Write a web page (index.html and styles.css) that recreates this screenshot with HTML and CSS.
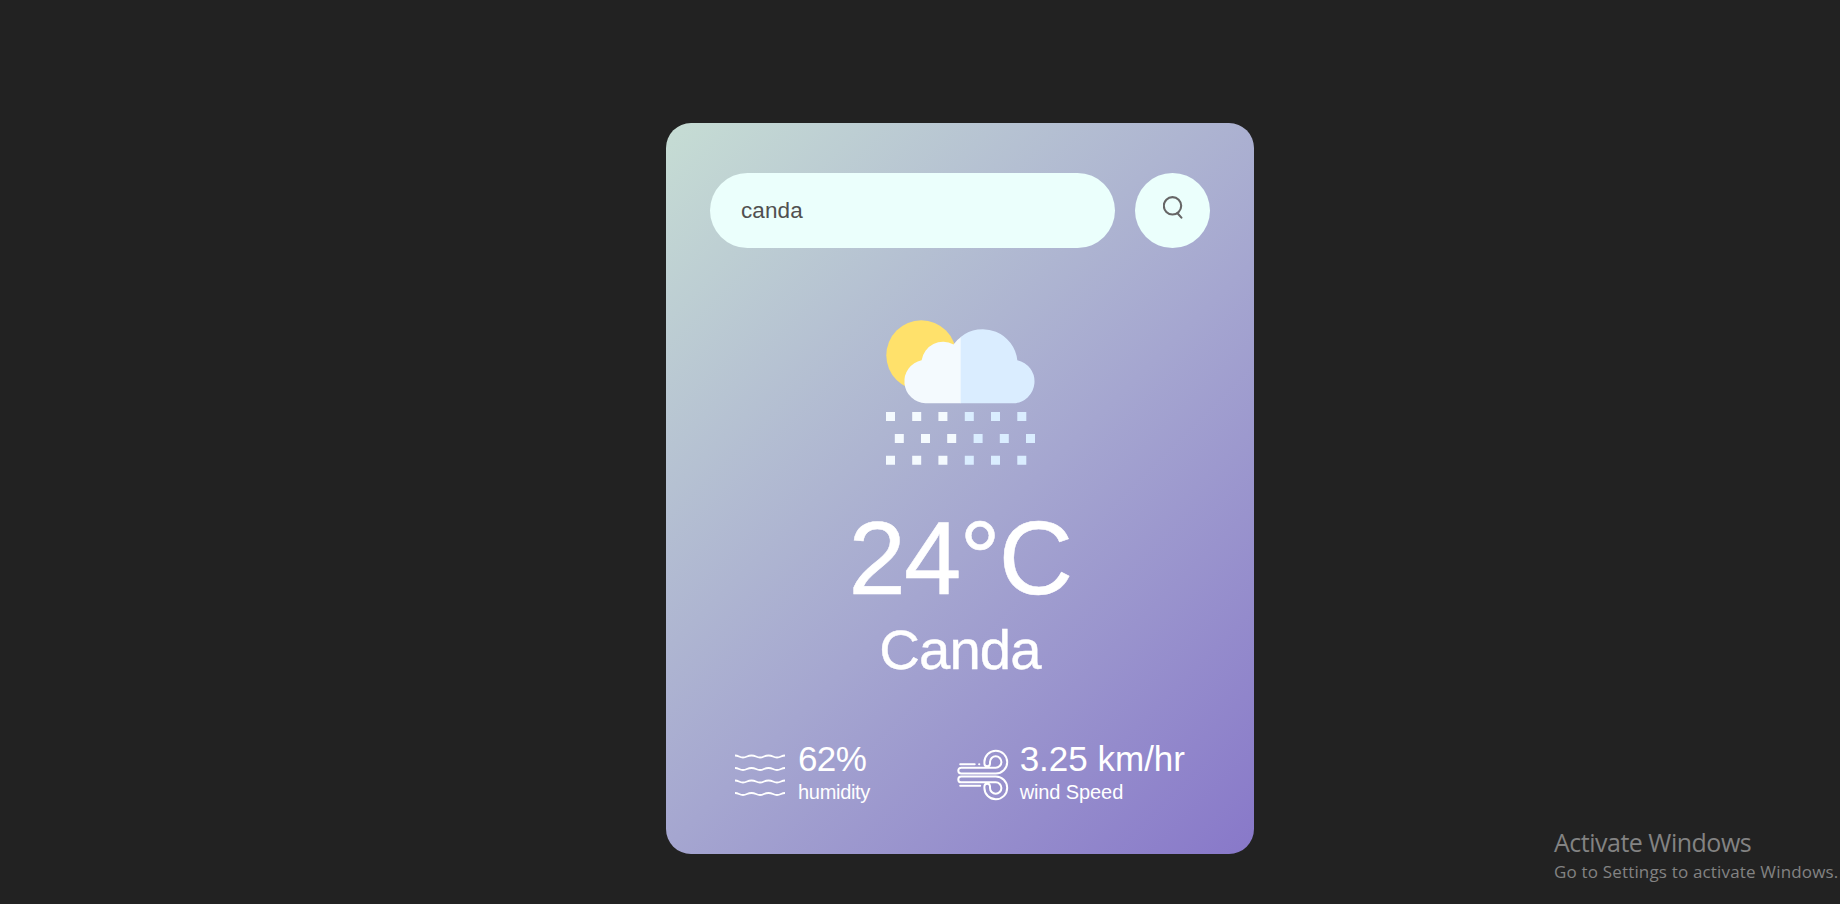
FILE: index.html
```
<!DOCTYPE html>
<html lang="en">
<head>
<meta charset="utf-8">
<title>Weather</title>
<link rel="stylesheet" href="styles.css">
</head>
<body>
<main class="card">
  <form class="search">
    <input class="search-input" type="text" value="canda" spellcheck="false">
    <button class="search-button" type="button" aria-label="Search">
      <svg class="search-icon" viewBox="0 0 20 24"><circle cx="9.5" cy="10.8" r="8.700"/><path d="M14.500 18.300l3.900 4.300"/></svg>
    </button>
  </form>
  <section class="weather">
    <svg class="weather-icon" viewBox="0 0 149 145">
      <circle cx="35.3" cy="35.3" r="35" fill="#ffe16b"/>
      <path fill="#f4fafe" d="M75 83.3H39.5A21.8 21.8 0 0 1 35.6 40.2A21.7 21.7 0 0 1 67.5 24.5Q70.5 20 75 17Z"/>
      <path fill="#daedff" d="M74.700 83.300H127.300A21.800 21.800 0 0 0 131.300 40.200A34.800 34.800 0 0 0 74.700 17Z"/>
      <path fill="#f4fafe" d="M0 92h9v9H0zM26.2 92h9v9h-9zM52.4 92h9v9h-9zM8.8 114h9v9h-9zM35 114h9v9h-9zM61.2 114h9v9h-9zM0 135.8h9v9H0zM26.2 135.8h9v9h-9zM52.4 135.8h9v9h-9z"/>
      <path fill="#daedff" d="M78.8 92h9v9h-9zM105 92h9v9h-9zM131.3 92h9v9h-9zM87.6 114h9v9h-9zM113.8 114h9v9h-9zM140 114h9v9h-9zM78.8 135.8h9v9h-9zM105 135.8h9v9h-9zM131.3 135.8h9v9h-9z"/>
    </svg>
    <h1 class="temp">24°C</h1>
    <h2 class="city">Canda</h2>
  </section>
  <section class="details">
    <div class="detail">
      <svg class="detail-icon waves" viewBox="0 0 50 50">
        <path d="M0 5.5C4 5.500 4 7.500 8 7.500S12 5.500 16.500 5.500S21 7.500 25 7.500S29 5.500 33.500 5.500S38 7.500 42 7.500S46 5.500 50 5.500"/>
        <path d="M0 18C4 18 4 20 8 20S12 18 16.500 18S21 20 25 20S29 18 33.500 18S38 20 42 20S46 18 50 18"/>
        <path d="M0 30.500C4 30.500 4 32.500 8 32.500S12 30.500 16.500 30.500S21 32.500 25 32.500S29 30.500 33.500 30.500S38 32.500 42 32.500S46 30.500 50 30.500"/>
        <path d="M0 43C4 43 4 45 8 45S12 43 16.500 43S21 45 25 45S29 43 33.500 43S38 45 42 45S46 43 50 43"/>
      </svg>
      <div><p class="value percent">62%</p><p class="label">humidity</p></div>
    </div>
    <div class="detail">
      <svg class="detail-icon" viewBox="-.7 0 50 50">
        <path d="M2.500 14.300H17M21.400 14.300H21.600M2.500 35.700H22.500"/>
        <path d="M38 23.500H3.500A2.900 2.900 0 0 1 3.500 17.700H38A5.700 5.700 0 1 0 32.300 12V13.500A2.800 2.800 0 0 1 26.700 13.500V12A11.400 11.400 0 1 1 38 23.500Z"/>
        <path d="M38 26.500H3.500A2.900 2.900 0 0 0 3.500 32.300H38A5.700 5.700 0 1 1 32.300 38V36.500A2.800 2.800 0 0 0 26.700 36.500V38A11.400 11.400 0 1 0 38 26.500Z"/>
      </svg>
      <div><p class="value">3.25 km/hr</p><p class="label wind">wind Speed</p></div>
    </div>
  </section>
</main>
<aside class="activation"><p class="activation-title">Activate Windows</p><p class="activation-text">Go to Settings to activate Windows.</p></aside>
</body>
</html>
```
FILE: styles.css
```
* { box-sizing: border-box; margin: 0; padding: 0; }
html { overflow: hidden; }
body { width: 1920px; height: 904px; background: #222; font-family: "Liberation Sans", Arial, sans-serif; padding-top: 123px; }
.card { width: 588px; height: 731px; margin: 0 auto; padding: 50px 44px; border-radius: 25px; color: #fff; background: linear-gradient(135deg, #c6ddd4 0%, #a5a6d0 55%, #8878c9 100%); }
.search { display: flex; justify-content: space-between; }
.search-input { width: 405px; height: 75px; padding: 1px 31px 0; border: 0; outline: 0; border-radius: 38px; background: #ebfffc; color: #505050; font: 22.5px "Liberation Sans", Arial, sans-serif; letter-spacing: .1px; }
.search-button { display: flex; justify-content: center; width: 75px; height: 75px; padding-top: 22px; border: 0; border-radius: 50%; background: #ebfffc; }
.search-icon { width: 20px; height: 24px; fill: none; stroke: #666; stroke-width: 2.1; stroke-linecap: round; }
.weather { display: flex; flex-direction: column; align-items: center; padding-top: 72px; }
.weather-icon { width: 149px; height: 145px; }
.temp { margin-top: 36px; font-size: 103px; line-height: 115px; font-weight: 400; letter-spacing: -1.8px; -webkit-text-stroke: .5px #fff; }
.city { margin-top: 2px; font-size: 56.25px; line-height: 64px; font-weight: 400; letter-spacing: -.9px; -webkit-text-stroke: .4px #fff; }
.details { display: flex; justify-content: space-between; padding: 0 25px; margin-top: 64px; }
.detail { display: flex; align-items: center; gap: 13px; }
.detail-icon { width: 50px; height: 50px; overflow: visible; fill: none; stroke: #fff; stroke-width: 2; stroke-linecap: round; }
.waves { stroke-width: 1.8; stroke-linecap: butt; }
.value { font-size: 35px; line-height: 40px; margin-top: -7px; }
.percent { letter-spacing: -.6px; }
.label { margin-top: 2px; font-size: 20px; line-height: 23px; letter-spacing: -.3px; }
.wind { letter-spacing: -.1px; }
.activation { position: absolute; left: 1554px; top: 824px; color: #838383; font-family: "Open Sans", "Noto Sans", sans-serif; white-space: nowrap; }
.activation-title { font-size: 25px; line-height: 36px; letter-spacing: -.5px; }
.activation-text { font-size: 17px; line-height: 24px; letter-spacing: .17px; }
```
